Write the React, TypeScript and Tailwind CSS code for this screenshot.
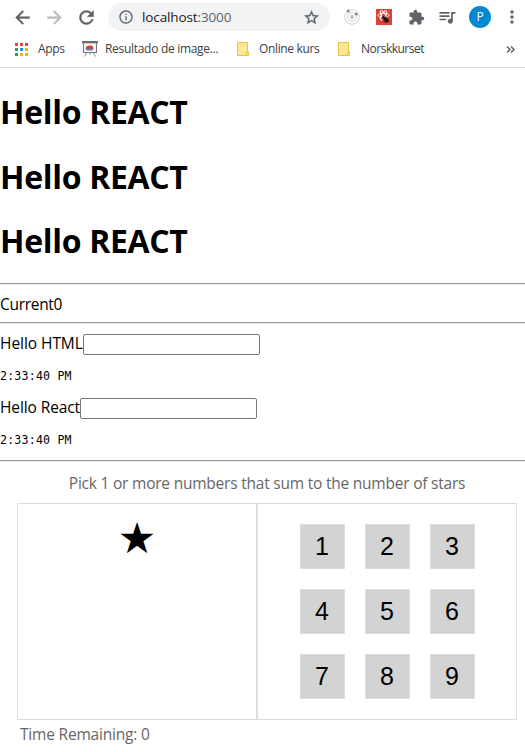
import React from "react";
import { MdExtension, MdMoreVert, MdOutlineInfo, MdQueueMusic } from "react-icons/md";

const ARROW_BACK = "M20 11H7.83l5.59-5.59L12 4l-8 8 8 8 1.41-1.41L7.83 13H20v-2z";
const ARROW_FORWARD = "M12 4l-1.41 1.41L16.17 11H4v2h12.17l-5.58 5.59L12 20l8-8z";
const REFRESH =
  "M17.65 6.35A7.958 7.958 0 0012 4c-4.42 0-7.99 3.58-7.99 8s3.57 8 7.99 8c3.73 0 6.84-2.55 7.73-6h-2.08A5.99 5.99 0 0112 18c-3.31 0-6-2.69-6-6s2.69-6 6-6c1.66 0 3.14.69 4.22 1.78L13 11h7V4l-2.35 2.35z";
const STAR =
  "M22 9.24l-7.19-.62L12 2 9.19 8.63 2 9.24l5.46 4.73L5.82 21 12 17.27 18.18 21l-1.63-7.03L22 9.24zM12 15.4l-3.76 2.27 1-4.28-3.32-2.88 4.38-.38L12 6.1l1.71 4.04 4.38.38-3.32 2.88 1 4.28L12 15.4z";

function Glyph({ d, className }: { d: string; className: string }) {
  return (
    <svg viewBox="0 0 24 24" className={className} fill="currentColor" stroke="currentColor" strokeWidth="0.5">
      <path d={d} />
    </svg>
  );
}

function OrbitIcon() {
  return (
    <svg width="16" height="16" viewBox="0 0 16 16" fill="none" stroke="#cfcfcf">
      <circle cx="8" cy="8" r="7.3" />
      <circle cx="8" cy="8" r="4.6" />
      <circle cx="8" cy="8" r="2.2" fill="#c4c4c4" stroke="none" />
      <circle cx="4.2" cy="2" r="1.5" fill="#858585" stroke="none" />
      <circle cx="12.2" cy="5" r="1.5" fill="#858585" stroke="none" />
    </svg>
  );
}

function ReactBugIcon() {
  return (
    <svg width="16" height="16" viewBox="0 0 16 16">
      <rect width="16" height="16" fill="#dd4436" />
      <g fill="none" stroke="#fff" strokeWidth="0.9">
        <ellipse cx="7.5" cy="6.3" rx="5.6" ry="2.1" />
        <ellipse cx="7.5" cy="6.3" rx="5.2" ry="2.1" transform="rotate(60 7.5 6.3)" />
        <ellipse cx="7.5" cy="6.3" rx="5.2" ry="2.1" transform="rotate(120 7.5 6.3)" />
      </g>
      <path d="M5.5 9.5l7.5 2.5M6.5 12.5l6-4M9 14l1-7" stroke="#2b1512" strokeWidth="0.8" />
      <ellipse cx="10" cy="10.8" rx="2" ry="3.2" fill="#2b1512" transform="rotate(-45 10 10.8)" />
      <circle cx="7.4" cy="8.2" r="1.3" fill="#2b1512" />
    </svg>
  );
}

function AppsIcon() {
  const colors = ["#f33b30", "#f33b30", "#f33b30", "#2fa35a", "#1e88f5", "#f9b30b", "#2fa35a", "#f9b30b", "#f9b30b"];
  return (
    <svg width="13" height="13" viewBox="0 0 13 13" shapeRendering="crispEdges">
      {colors.map((c, i) => (
        <rect key={i} x={(i % 3) * 5} y={Math.floor(i / 3) * 5} width="3" height="3" fill={c} />
      ))}
    </svg>
  );
}

function BoardIcon() {
  return (
    <svg width="16" height="16" viewBox="0 0 16 16" fill="none">
      <path d="M4.5 12L2.5 15.5M11.5 12l2 3.5M8 12v2" stroke="#8a8a8a" />
      <rect x="1.5" y="1.5" width="13" height="10" fill="#f4f4f4" stroke="#777" />
      <rect x="0" y="0" width="16" height="2.3" rx="0.6" fill="#6c6c6c" />
      <ellipse cx="7.5" cy="7.4" rx="3.9" ry="2.2" fill="#5b86b8" />
      <path d="M4 6.6C4.6 4 10.6 3.8 11.2 6.4C11.4 8.2 9.4 8.4 7.8 7.6C6.4 8.2 4 8.2 4 6.6z" fill="#e23a2c" />
    </svg>
  );
}

function FolderIcon() {
  return (
    <svg width="12" height="14" viewBox="0 0 12 14">
      <path d="M.5.5h10v9h1v4H.5z" fill="#ffe596" stroke="#e6c443" />
      <path d="M9.5 13V10.5h1.5" fill="none" stroke="#e6c443" />
    </svg>
  );
}

function Rule() {
  return <hr className="h-[2px] w-full shrink-0 border-t border-b border-t-[#9a9a9a] border-b-[#ececec]" />;
}

function Clock() {
  return (
    <pre className="h-[43px] pt-[13px] font-['DejaVu_Sans_Mono',monospace] text-[11.6px] leading-4 tracking-[0.2px]">
      2:33:40 PM
    </pre>
  );
}

export default function App() {
  return (
    <div className="h-[752px] w-[525px] overflow-hidden bg-white font-['Open_Sans',sans-serif] text-black">
      <header className="h-[68px] border-b border-[#dadce0]">
        <div className="flex h-[34px] items-center text-[#5f6368]">
          <Glyph d={ARROW_BACK} className="ml-3 size-[21px]" />
          <Glyph d={ARROW_FORWARD} className="ml-[11px] size-[21px] text-[#babcbe]" />
          <Glyph d={REFRESH} className="ml-[11px] size-[21px]" />
          <div className="ml-[11px] flex h-7 w-[222px] items-center rounded-full bg-[#f1f3f4] pr-[10px] pl-[10px]">
            <MdOutlineInfo className="size-4" />
            <span className="ml-[8px] flex-1 text-[13.5px] leading-5 tracking-[-0.12px] whitespace-nowrap">
              <span className="text-[#202124]">localhost</span>:3000
            </span>
            <Glyph d={STAR} className="size-[17px]" />
          </div>
          <div className="ml-[14px]"><OrbitIcon /></div>
          <div className="ml-4"><ReactBugIcon /></div>
          <MdExtension className="ml-4 size-[17px]" />
          <MdQueueMusic className="ml-[12px] size-5" />
          <span className="ml-[12px] flex size-[22px] items-center justify-center rounded-full bg-[#0388d1] text-[12px] text-white">
            P
          </span>
          <MdMoreVert className="ml-[11px] size-5" />
        </div>
        <div className="flex h-[30px] items-center pl-[15px] text-[12px] tracking-[-0.35px] whitespace-nowrap text-[#3c4043]">
          <AppsIcon />
          <span className="ml-[10px] w-[44px]">Apps</span>
          <BoardIcon />
          <span className="ml-[7px] w-[132px] tracking-[-0.3px]">Resultado de image...</span>
          <FolderIcon />
          <span className="ml-[10px] w-[79px]">Online kurs</span>
          <FolderIcon />
          <span className="ml-[11px] w-[145px] tracking-[-0.5px]">Norskkurset</span>
          <svg width="9" height="7" viewBox="0 0 9 7" fill="none" stroke="#5f6368" strokeWidth="1.5">
            <path d="M1 .5l3 3-3 3M5 .5l3 3-3 3" />
          </svg>
        </div>
      </header>

      <div className="flex h-[215px] flex-col gap-[21.4px] pt-[22.2px] text-[32px] leading-[43px] font-bold tracking-[-0.32px]">
        <h1>Hello REACT</h1>
        <h1>Hello REACT</h1>
        <h1>Hello REACT</h1>
      </div>
      <Rule />
      <div className="h-[37px] pt-2 text-[15.5px] leading-[22px] tracking-[-0.3px]">Current0</div>
      <Rule />
      <div className="pt-[10px]">
        <div className="flex h-[21px] items-center">
          <label htmlFor="html" className="-mt-[2px] w-[83px] text-[15.5px] leading-[21px] tracking-[-0.05px] whitespace-nowrap">Hello HTML</label>
          <input id="html" className="h-[21px] w-[177px] rounded-[2px] border border-[#767676] px-1 text-[13px]" />
        </div>
        <Clock />
        <div className="flex h-[21px] items-center">
          <label htmlFor="react" className="-mt-[2px] w-[80px] text-[15.5px] leading-[21px] tracking-[-0.1px] whitespace-nowrap">Hello React</label>
          <input id="react" className="h-[21px] w-[177px] rounded-[2px] border border-[#767676] px-1 text-[13px]" />
        </div>
        <Clock />
      </div>
      <div className="-mt-[2px]"><Rule /></div>

      <main className="pl-[17px] text-[#666]">
        <p className="h-[41px] w-[500px] pt-[10px] text-center text-[15.5px] leading-[22px] tracking-[-0.22px] whitespace-nowrap">
          Pick 1 or more numbers that sum to the number of stars
        </p>
        <div className="flex h-[217px] w-[500px]">
          <section className="w-[240px] border border-[#ddd] text-center font-['DejaVu_Sans',sans-serif] text-[43px] leading-[68px] text-black">
            ★
          </section>
          <section className="grid w-[260px] grid-cols-[repeat(3,45px)] content-start justify-center gap-5 border border-[#ddd] pt-5">
            {[1, 2, 3, 4, 5, 6, 7, 8, 9].map((n) => (
              <button key={n} className="size-[45px] border border-[#ddd] bg-[#d3d3d3] font-['Liberation_Sans',Arial,sans-serif] text-[25px] leading-[43px] text-black">
                {n}
              </button>
            ))}
          </section>
        </div>
        <p className="pt-[3px] pl-[3px] text-[15.5px] leading-[22px] tracking-[-0.2px]">Time Remaining: 0</p>
      </main>
    </div>
  );
}
